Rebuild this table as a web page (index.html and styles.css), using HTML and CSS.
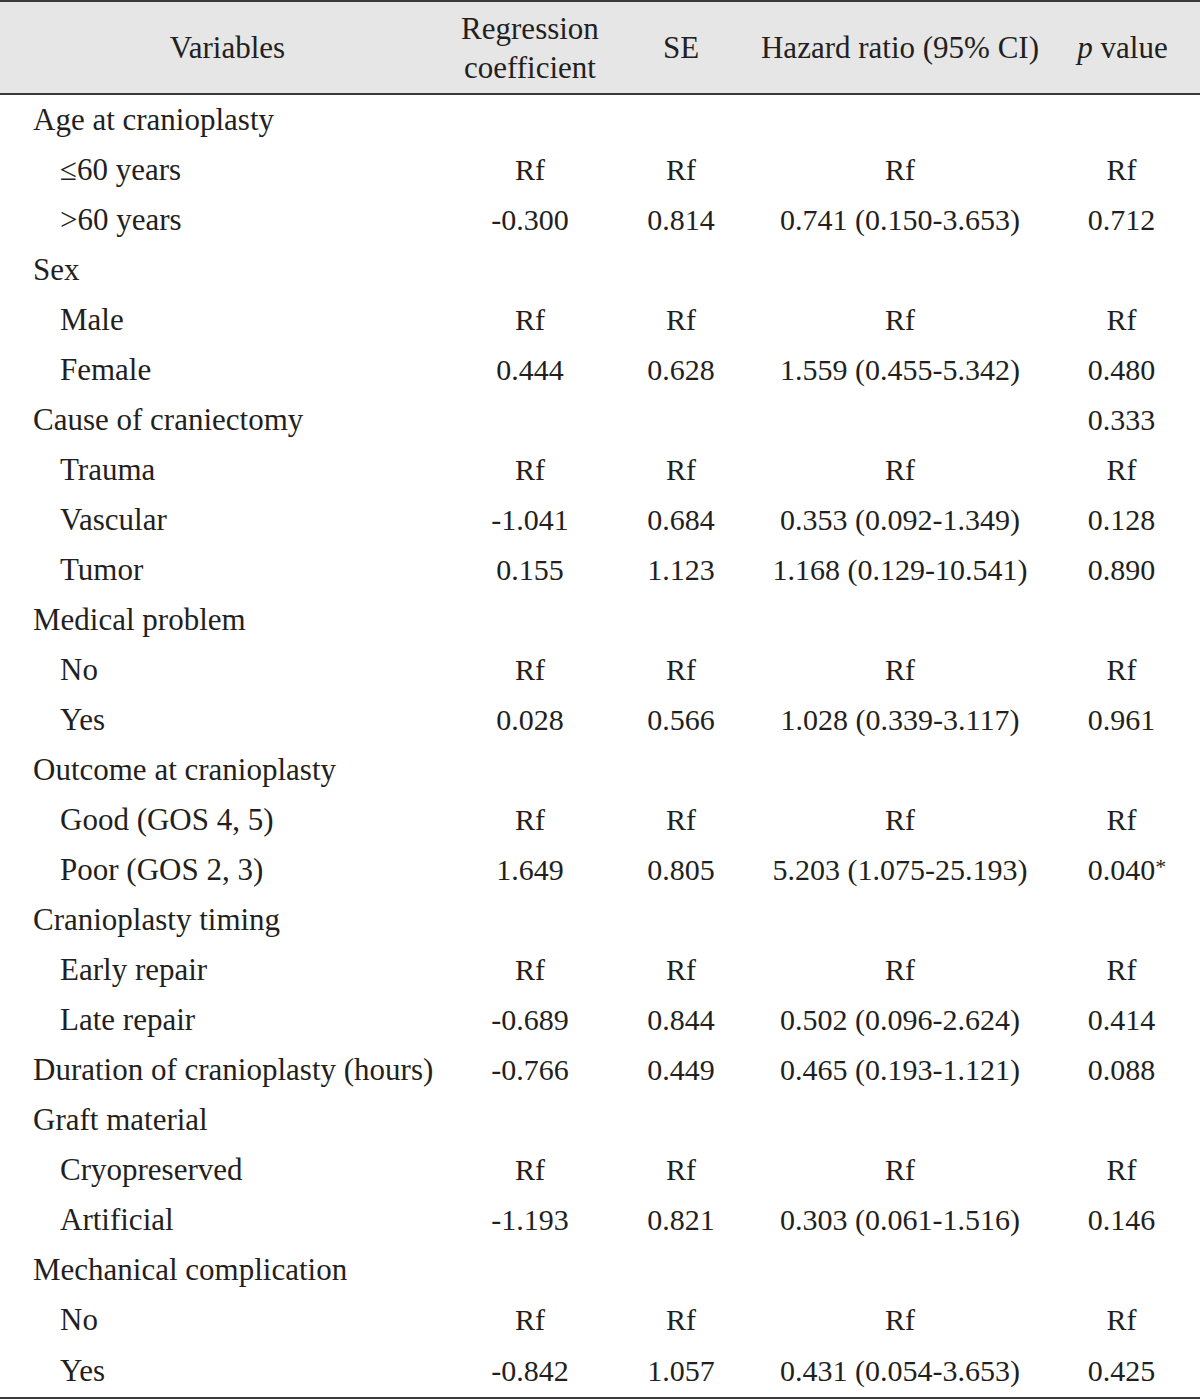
FILE: index.html
```html
<!DOCTYPE html>
<html lang="en">

<head>
    <meta charset="UTF-8">
    <meta name="viewport" content="width=device-width, initial-scale=1.0">
    <title>Cox regression</title>
    <link rel="stylesheet" href="styles.css">
</head>

<body>
    <table class="result-table">
        <colgroup>
            <col class="col-var">
            <col class="col-coef">
            <col class="col-se">
            <col class="col-hr">
            <col class="col-p">
        </colgroup>
        <thead>
            <tr>
                <th>Variables</th>
                <th>Regression<br>coefficient</th>
                <th>SE</th>
                <th>Hazard ratio (95% CI)</th>
                <th><i>p</i> value</th>
            </tr>
        </thead>
        <tbody>
            <tr class="group"><td>Age at cranioplasty</td><td></td><td></td><td></td><td></td></tr>
            <tr><td class="sub">&le;60 years</td><td>Rf</td><td>Rf</td><td>Rf</td><td>Rf</td></tr>
            <tr><td class="sub">&gt;60 years</td><td>-0.300</td><td>0.814</td><td>0.741 (0.150-3.653)</td><td>0.712</td></tr>
            <tr class="group"><td>Sex</td><td></td><td></td><td></td><td></td></tr>
            <tr><td class="sub">Male</td><td>Rf</td><td>Rf</td><td>Rf</td><td>Rf</td></tr>
            <tr><td class="sub">Female</td><td>0.444</td><td>0.628</td><td>1.559 (0.455-5.342)</td><td>0.480</td></tr>
            <tr class="group"><td>Cause of craniectomy</td><td></td><td></td><td></td><td>0.333</td></tr>
            <tr><td class="sub">Trauma</td><td>Rf</td><td>Rf</td><td>Rf</td><td>Rf</td></tr>
            <tr><td class="sub">Vascular</td><td>-1.041</td><td>0.684</td><td>0.353 (0.092-1.349)</td><td>0.128</td></tr>
            <tr><td class="sub">Tumor</td><td>0.155</td><td>1.123</td><td>1.168 (0.129-10.541)</td><td>0.890</td></tr>
            <tr class="group"><td>Medical problem</td><td></td><td></td><td></td><td></td></tr>
            <tr><td class="sub">No</td><td>Rf</td><td>Rf</td><td>Rf</td><td>Rf</td></tr>
            <tr><td class="sub">Yes</td><td>0.028</td><td>0.566</td><td>1.028 (0.339-3.117)</td><td>0.961</td></tr>
            <tr class="group"><td>Outcome at cranioplasty</td><td></td><td></td><td></td><td></td></tr>
            <tr><td class="sub">Good (GOS 4, 5)</td><td>Rf</td><td>Rf</td><td>Rf</td><td>Rf</td></tr>
            <tr><td class="sub">Poor (GOS 2, 3)</td><td>1.649</td><td>0.805</td><td>5.203 (1.075-25.193)</td><td>0.040<span class="star">*</span></td></tr>
            <tr class="group"><td>Cranioplasty timing</td><td></td><td></td><td></td><td></td></tr>
            <tr><td class="sub">Early repair</td><td>Rf</td><td>Rf</td><td>Rf</td><td>Rf</td></tr>
            <tr><td class="sub">Late repair</td><td>-0.689</td><td>0.844</td><td>0.502 (0.096-2.624)</td><td>0.414</td></tr>
            <tr class="group"><td>Duration of cranioplasty (hours)</td><td>-0.766</td><td>0.449</td><td>0.465 (0.193-1.121)</td><td>0.088</td></tr>
            <tr class="group"><td>Graft material</td><td></td><td></td><td></td><td></td></tr>
            <tr><td class="sub">Cryopreserved</td><td>Rf</td><td>Rf</td><td>Rf</td><td>Rf</td></tr>
            <tr><td class="sub">Artificial</td><td>-1.193</td><td>0.821</td><td>0.303 (0.061-1.516)</td><td>0.146</td></tr>
            <tr class="group"><td>Mechanical complication</td><td></td><td></td><td></td><td></td></tr>
            <tr><td class="sub">No</td><td>Rf</td><td>Rf</td><td>Rf</td><td>Rf</td></tr>
            <tr><td class="sub">Yes</td><td>-0.842</td><td>1.057</td><td>0.431 (0.054-3.653)</td><td>0.425</td></tr>
        </tbody>
    </table>
</body>

</html>
```

FILE: styles.css
```css
* {
    padding: 0;
    margin: 0;
}

body {
    font-family: "Liberation Serif", "DejaVu Serif", serif;
    color: #231f20;
    background-color: #fff;
}

.result-table {
    width: 1200px;
    border-collapse: collapse;
    table-layout: fixed;
    font-size: 30px;
}

.col-var { width: 455px; }
.col-coef { width: 150px; }
.col-se { width: 152px; }
.col-hr { width: 286px; }
.col-p { width: 157px; }

.result-table thead th {
    font-weight: normal;
    font-size: 31px;
    background-color: #e6e6e6;
    border-top: 2px solid #3a3a3a;
    border-bottom: 2px solid #3a3a3a;
    height: 91px;
    line-height: 39px;
    text-align: center;
    vertical-align: middle;
}

.result-table thead th:last-child {
    padding-left: 2px;
}

.result-table tbody td {
    height: 50px;
    line-height: 50px;
    text-align: center;
    white-space: nowrap;
}

.result-table tbody td:first-child {
    text-align: left;
    padding-left: 33px;
    font-size: 31px;
}

.result-table tbody td.sub {
    padding-left: 60px;
}

.result-table tbody tr:last-child td {
    height: 52px;
    border-bottom: 2px solid #3a3a3a;
}

.star {
    display: inline-block;
    width: 11px;
    margin-right: -11px;
    line-height: 1;
    vertical-align: 6px;
    font-size: 22px;
    text-align: left;
}
```
